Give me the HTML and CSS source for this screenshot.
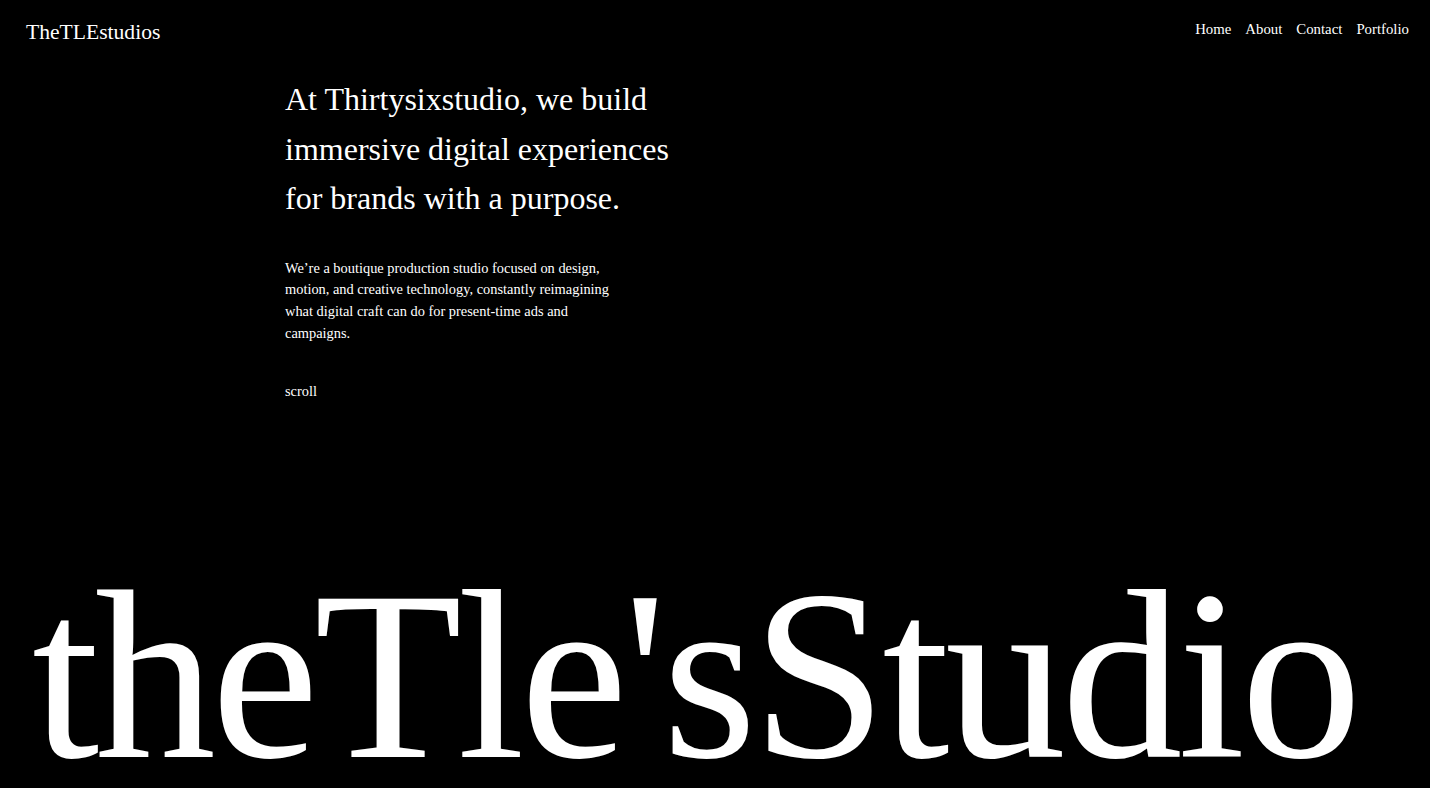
FILE: index.html
```html
<!DOCTYPE html>
<html lang="en">
<head>
<meta charset="utf-8">
<title>TheTLEstudios</title>
<link rel="stylesheet" href="styles.css">
</head>
<body>
<div class="page">
  <header class="header">
    <div class="logo">TheTLEstudios</div>
    <nav class="nav">
      <a href="#">Home</a>
      <a href="#">About</a>
      <a href="#">Contact</a>
      <a href="#">Portfolio</a>
    </nav>
  </header>
  <main class="hero">
    <h1 class="headline">At Thirtysixstudio, we build immersive digital experiences for brands with a purpose.</h1>
    <p class="intro">We’re a boutique production studio focused on design, motion, and creative technology, constantly reimagining what digital craft can do for present-time ads and campaigns.</p>
    <div class="scroll">scroll</div>
  </main>
  <div class="bigtitle">theTle'sStudio</div>
</div>
</body>
</html>
```
FILE: styles.css
```css
html, body {
  margin: 0;
  padding: 0;
  background: #000;
  color: #fff;
  font-family: "Liberation Serif", "Times New Roman", serif;
  overflow: hidden;
}

.page {
  height: 100vh;
  display: flex;
  flex-direction: column;
}

.header {
  display: flex;
  justify-content: space-between;
  align-items: flex-start;
  padding: 20px 21px 0 26px;
}

.logo {
  font-size: 21.6px;
}

.nav {
  display: flex;
  gap: 14px;
  font-size: 14.8px;
  margin-top: 1px;
}

.nav a {
  color: #fff;
  text-decoration: none;
}

.hero {
  padding-left: 285px;
}

.headline {
  margin: 30px 0 0;
  font-size: 32px;
  font-weight: normal;
  line-height: 1.55;
  max-width: 410px;
}

.intro {
  margin: 34px 0 0;
  font-size: 14.4px;
  line-height: 1.5;
  max-width: 340px;
}

.scroll {
  margin-top: 37px;
  font-size: 14.4px;
  line-height: 1.5;
}

.bigtitle {
  margin-top: auto;
  padding: 0 0 3px 32px;
  font-size: 242px;
  line-height: 0.9;
  letter-spacing: -0.0185em;
  white-space: nowrap;
}
```
